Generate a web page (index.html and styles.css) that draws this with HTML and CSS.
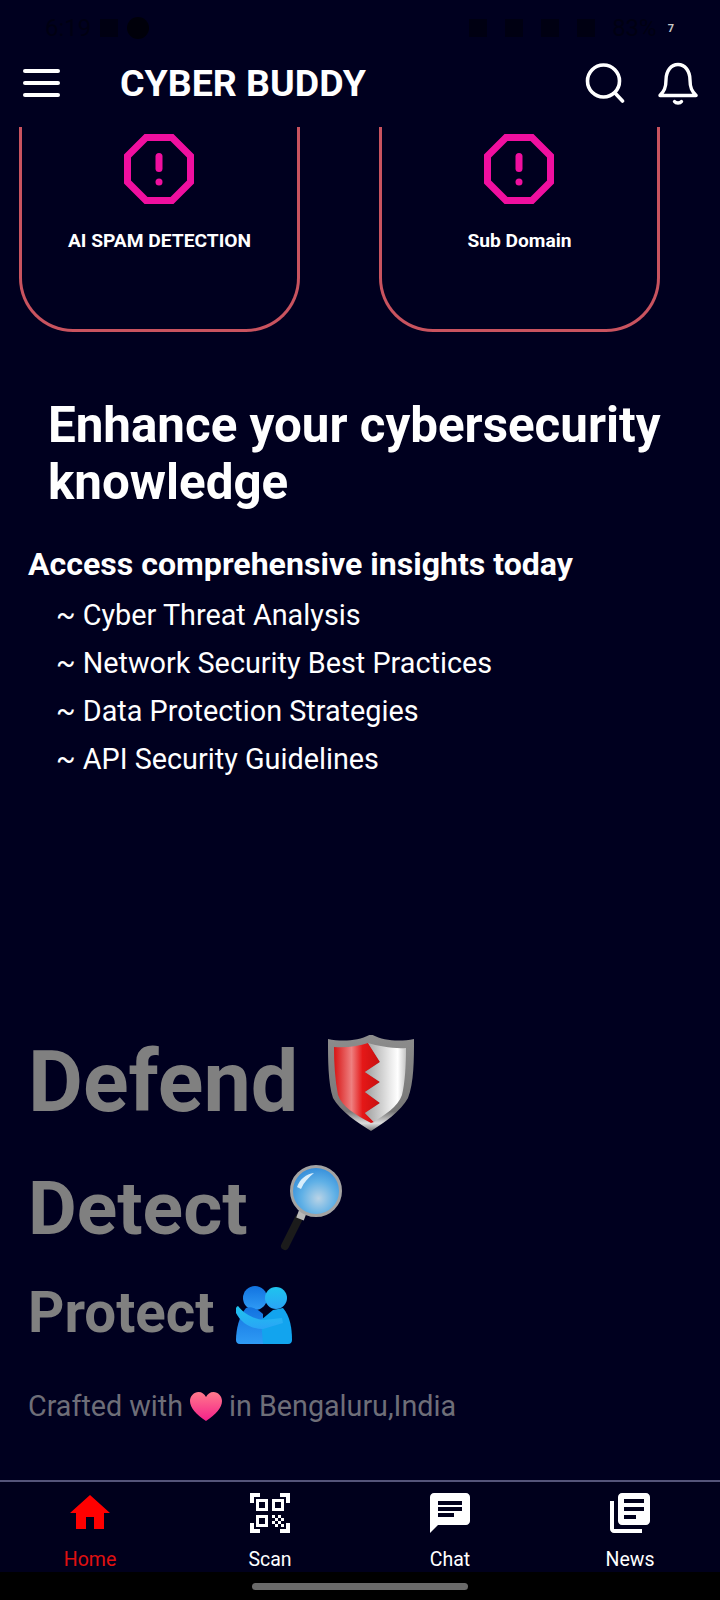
FILE: index.html
```html
<!DOCTYPE html>
<html>
<head>
<meta charset="utf-8">
<title>Cyber Buddy</title>
<link rel="stylesheet" href="styles.css">
</head>
<body>
<div class="phone">

	<div class="status">
		<div class="status-left">
			<span>6:19</span>
			<span class="status-box"></span>
			<span class="status-dot"></span>
		</div>
		<div class="status-right">
			<span class="status-icons">
				<span class="status-box"></span>
				<span class="status-box"></span>
				<span class="status-box"></span>
				<span class="status-box"></span>
			</span>
			<span>83%</span>
			<span class="status-seven">7</span>
		</div>
	</div>

	<div class="appbar">
		<div class="menu"><i></i><i></i><i></i></div>
		<div class="brand">CYBER BUDDY</div>
		<svg class="search" viewBox="0 0 40 40" fill="none" stroke="#fff" stroke-width="3.6" stroke-linecap="round">
			<circle cx="18.5" cy="18" r="16"/>
			<path d="M30 30l7.5 8"/>
		</svg>
		<svg class="bell" viewBox="0 0 40 44" fill="none" stroke="#fff" stroke-width="3.4" stroke-linecap="round" stroke-linejoin="round">
			<path d="M8 19c0-9 5-15.500 12-15.500s12 6.500 12 15.500c0 8 2 11 6 15.500H2c4-4.500 6-7.500 6-15.500z"/>
			<path d="M16.500 40.500c1.500 2 5.500 2 7 0"/>
		</svg>
	</div>

	<div class="cards">
		<div class="card">
			<svg class="alert" viewBox="0 0 70 70" fill="none" stroke="#f00f9f">
				<path d="M22 3.500h26L66.500 22v26L48 66.500H22L3.500 48V22z" stroke-width="7"/>
				<path d="M35 22.500v12" stroke-width="7" stroke-linecap="round"/>
				<circle cx="35" cy="48" r="3.500" fill="#f00f9f" stroke="none"/>
			</svg>
			<div class="card-label">AI SPAM DETECTION</div>
		</div>
		<div class="card">
			<svg class="alert" viewBox="0 0 70 70" fill="none" stroke="#f00f9f">
				<path d="M22 3.500h26L66.500 22v26L48 66.500H22L3.500 48V22z" stroke-width="7"/>
				<path d="M35 22.500v12" stroke-width="7" stroke-linecap="round"/>
				<circle cx="35" cy="48" r="3.500" fill="#f00f9f" stroke="none"/>
			</svg>
			<div class="card-label">Sub Domain</div>
		</div>
	</div>

	<h1 class="headline">Enhance your cybersecurity knowledge</h1>

	<div class="insights">
		<h2>Access comprehensive insights today</h2>
		<ul>
			<li>~ Cyber Threat Analysis</li>
			<li>~ Network Security Best Practices</li>
			<li>~ Data Protection Strategies</li>
			<li>~ API Security Guidelines</li>
		</ul>
	</div>

	<div class="motto">
		<div class="motto-row defend">
			<span>Defend</span>
			<svg class="shield" viewBox="0 0 86 96">
				<defs>
					<linearGradient id="rim" x1="0" y1="0" x2="0" y2="1">
						<stop offset="0" stop-color="#8d8d8d"/>
						<stop offset=".8" stop-color="#777"/>
						<stop offset=".92" stop-color="#ddd"/>
						<stop offset="1" stop-color="#777"/>
					</linearGradient>
					<linearGradient id="red" x1="0" y1="0" x2="1" y2="0">
						<stop offset="0" stop-color="#d81414"/>
						<stop offset=".38" stop-color="#ee8080"/>
						<stop offset=".62" stop-color="#e51818"/>
						<stop offset="1" stop-color="#c81010"/>
					</linearGradient>
					<linearGradient id="silver" x1="0" y1="0" x2="1" y2="0">
						<stop offset="0" stop-color="#a0a0a0"/>
						<stop offset=".6" stop-color="#e8e8e8"/>
						<stop offset=".8" stop-color="#fff"/>
						<stop offset="1" stop-color="#c4c4c4"/>
					</linearGradient>
				</defs>
				<path d="M0 4c14 3 32 2 43-5 11 7 29 8 43 5 0 20 0 44-6 59-7 13-24 25-37 33C30 88 12 76 5 63 0 48 0 24 0 4z" fill="url(#rim)"/>
				<path d="M6 12c13 1 25-1 34-4l12 19-15 10 15 10-15 10 15 11-15 10 9 9-3 1C28 80 14 72 10 60 7 45 6 28 6 12z" fill="url(#red)"/>
				<path d="M40 8c10 3 26 6 38 5 0 17-1 35-4 47-4 12-18 20-28 27l-9-9 15-10-15-11 15-10-15-10 15-10z" fill="url(#silver)"/>
			</svg>
		</div>
		<div class="motto-row detect">
			<span>Detect</span>
			<svg class="lens" viewBox="0 0 62 86">
				<defs>
					<radialGradient id="glass" cx=".55" cy=".65" r=".7">
						<stop offset="0" stop-color="#b9d3e6"/>
						<stop offset=".5" stop-color="#5fb0e6"/>
						<stop offset="1" stop-color="#2a86d8"/>
					</radialGradient>
				</defs>
				<path d="M19 53L5 81" stroke="#1b1b1b" stroke-width="8" stroke-linecap="round"/>
				<path d="M23 46l-3 8" stroke="#b8b8b8" stroke-width="8"/>
				<circle cx="36" cy="26" r="24.500" fill="url(#glass)" stroke="#a3a3a3" stroke-width="3"/>
				<path d="M17 22c3-8 9-13 17-14-5 4-10 9-13 16z" fill="#d8eefb"/>
			</svg>
		</div>
		<div class="motto-row protect">
			<span>Protect</span>
			<svg class="hug" viewBox="0 0 56 58">
				<defs>
					<linearGradient id="hugback" x1="0" y1="0" x2="0" y2="1">
						<stop offset="0" stop-color="#1273e0"/>
						<stop offset="1" stop-color="#2f9bf5"/>
					</linearGradient>
					<linearGradient id="hugfront" x1="0" y1="0" x2="0" y2="1">
						<stop offset="0" stop-color="#1fc4ee"/>
						<stop offset="1" stop-color="#2aa4f6"/>
					</linearGradient>
				</defs>
				<circle cx="19" cy="12" r="12" fill="url(#hugback)"/>
				<path d="M10 22C3 30 0 44 0 54c0 2 1 4 4 4h23V28c-5-5-12-8-17-6z" fill="url(#hugback)"/>
				<circle cx="40" cy="12" r="11" fill="url(#hugfront)"/>
				<path d="M27 58h25c3 0 4-2 4-4 0-12-2-24-9-32l-10 2-12 10z" fill="#12a4ee"/>
				<path d="M2 20c6 8 16 13 26 14l18-2 1 5-20 6c-12 0-22-6-27-16-1-4 0-6 2-7z" fill="url(#hugfront)"/>
			</svg>
		</div>
		<div class="crafted">
			<span>Crafted with</span>
			<svg class="heart" viewBox="0 0 32 29">
				<defs>
					<linearGradient id="heartfill" x1="0" y1="0" x2="0" y2="1">
						<stop offset="0" stop-color="#ff7a8c"/>
						<stop offset="1" stop-color="#f5208a"/>
					</linearGradient>
				</defs>
				<path d="M16 29C6 22 0 16 0 9 0 4 4 0 8.500 0 12 0 14.500 2 16 5c1.500-3 4-5 7.500-5C28 0 32 4 32 9c0 7-6 13-16 20z" fill="url(#heartfill)"/>
			</svg>
			<span>in Bengaluru,India</span>
		</div>
	</div>

	<div class="nav">
		<div class="nav-item active">
			<svg viewBox="0 0 24 24"><path d="M10 20v-6h4v6h5v-8h3L12 3 2 12h3v8z"/></svg>
			<span>Home</span>
		</div>
		<div class="nav-item">
			<svg viewBox="0 0 24 24"><path d="M9.500 6.500v3h-3v-3h3M11 5H5v6h6V5zm-1.500 9.500v3h-3v-3h3M11 13H5v6h6v-6zm6.500-6.500v3h-3v-3h3M19 5h-6v6h6V5zm-6 8h1.500v1.500H13V13zm1.500 1.500H16V16h-1.500v-1.500zM16 13h1.500v1.500H16V13zm-3 3h1.500v1.500H13V16zm1.500 1.500H16V19h-1.500v-1.500zM16 16h1.500v1.500H16V16zm1.500-1.500H19V16h-1.500v-1.500zm0 3H19V19h-1.500v-1.500zM22 7h-2V4h-3V2h5v5zm0 15v-5h-2v3h-3v2h5zM2 22h5v-2H4v-3H2v5zM2 2v5h2V4h3V2H2z"/></svg>
			<span>Scan</span>
		</div>
		<div class="nav-item">
			<svg viewBox="0 0 24 24"><path d="M20 2H4c-1.100 0-2 .9-2 2v18l4-4h14c1.100 0 2-.9 2-2V4c0-1.100-.9-2-2-2zM6 9h12v2H6V9zm8 5H6v-2h8v2zm4-6H6V6h12v2z"/></svg>
			<span>Chat</span>
		</div>
		<div class="nav-item">
			<svg viewBox="0 0 24 24"><path d="M4 6H2v14c0 1.100.9 2 2 2h14v-2H4V6zm16-4H8c-1.100 0-2 .9-2 2v12c0 1.100.9 2 2 2h12c1.100 0 2-.9 2-2V4c0-1.100-.9-2-2-2zm-1 9H9V9h10v2zm-4 4H9v-2h6v2zm4-8H9V5h10v2z"/></svg>
			<span>News</span>
		</div>
	</div>

	<div class="gesture"><div class="gesture-bar"></div></div>

</div>
</body>
</html>
```

FILE: styles.css
```css
body {
	margin: 0;
	background-color: #00001f;
	font-family: Roboto, "Liberation Sans", sans-serif;
	color: #fff;
}

.phone {
	display: flex;
	flex-direction: column;
	width: 720px;
	height: 1600px;
	overflow: hidden;
}

/* status bar, almost the same colour as the page */
.status {
	display: flex;
	justify-content: space-between;
	align-items: center;
	height: 44px;
	padding: 12px 46px 0 45px;
	box-sizing: border-box;
	font-size: 24px;
	color: #000012;
}
.status-left, .status-right, .status-icons {
	display: flex;
	align-items: center;
	gap: 9px;
}
.status-icons {
	gap: 18px;
	margin-right: 8px;
}
.status-box {
	width: 18px;
	height: 18px;
	background-color: #000012;
}
.status-dot {
	width: 22px;
	height: 22px;
	border-radius: 50%;
	background-color: #00000a;
}
.status-seven {
	margin-left: 2px;
	font-size: 11px;
	font-weight: 700;
	color: #c8c8c8;
}

.appbar {
	display: flex;
	align-items: center;
	height: 83px;
	padding: 0 22px 6px 23px;
	box-sizing: border-box;
}
.menu {
	display: flex;
	flex-direction: column;
	gap: 8px;
	width: 37px;
	margin-top: 1px;
}
.menu i {
	display: block;
	height: 4px;
	border-radius: 2px;
	background-color: #fff;
}
.brand {
	flex: 1;
	margin-left: 60px;
	font-size: 37.500px;
	font-weight: 700;
}
.search {
	width: 40px;
	height: 40px;
	margin-right: 33px;
}
.bell {
	width: 40px;
	height: 44px;
}

.cards {
	display: flex;
	gap: 79px;
	padding-left: 19px;
}
.card {
	display: flex;
	flex-direction: column;
	align-items: center;
	box-sizing: border-box;
	width: 281px;
	height: 205px;
	padding-top: 7px;
	border: 3px solid #c9535f;
	border-top: 0;
	border-radius: 0 0 54px 54px;
}
.alert {
	width: 70px;
	height: 70px;
	margin-right: 2px;
}
.card-label {
	margin-top: 24px;
	font-size: 19.200px;
	font-weight: 700;
	line-height: 26px;
}

.headline {
	margin: 65px 30px 0 48px;
	font-size: 49.300px;
	font-weight: 700;
	line-height: 57px;
}

.insights {
	margin: 34px 0 0 28px;
}
.insights h2 {
	margin: 0;
	font-size: 32.100px;
	font-weight: 700;
	line-height: 38px;
}
.insights ul {
	margin: 8px 0 0;
	padding: 0 0 0 28px;
	list-style: none;
}
.insights li {
	font-size: 28.800px;
	line-height: 48px;
}

.motto {
	flex: 1;
	margin-top: 249px;
	padding-left: 28px;
	color: #808080;
	font-weight: 700;
}
.motto-row {
	display: flex;
	align-items: center;
}
.defend {
	height: 100px;
	font-size: 84.500px;
	gap: 30px;
}
.detect {
	height: 100px;
	margin-top: 26px;
	font-size: 75px;
	gap: 32px;
}
.protect {
	height: 60px;
	margin-top: 25px;
	font-size: 56.500px;
	gap: 22px;
}
.shield {
	width: 86px;
	height: 96px;
	margin-top: 2px;
}
.lens {
	width: 62px;
	height: 86px;
}
.hug {
	width: 56px;
	height: 58px;
	margin-top: 4px;
}
.crafted {
	display: flex;
	align-items: center;
	gap: 7px;
	margin-top: 46px;
	font-size: 28.700px;
	font-weight: 400;
	color: #6e6e78;
}
.heart {
	width: 32px;
	height: 29px;
}

.nav {
	display: grid;
	grid-template-columns: repeat(4, 180px);
	height: 92px;
	border-top: 2px solid #54547a;
	box-sizing: border-box;
	background-color: #00001c;
}
.nav-item {
	display: flex;
	flex-direction: column;
	align-items: center;
	padding-top: 7px;
	font-size: 19.500px;
	line-height: 24px;
}
.nav-item svg {
	width: 48px;
	height: 48px;
	margin-bottom: 11px;
	fill: #fff;
}
.nav-item.active {
	color: #e01010;
}
.nav-item.active svg {
	fill: #ff0000;
}

.gesture {
	display: flex;
	justify-content: center;
	height: 28px;
	padding-top: 11px;
	box-sizing: border-box;
	background-color: #000;
}
.gesture-bar {
	width: 216px;
	height: 7px;
	border-radius: 4px;
	background-color: #6a6a6a;
}
```
